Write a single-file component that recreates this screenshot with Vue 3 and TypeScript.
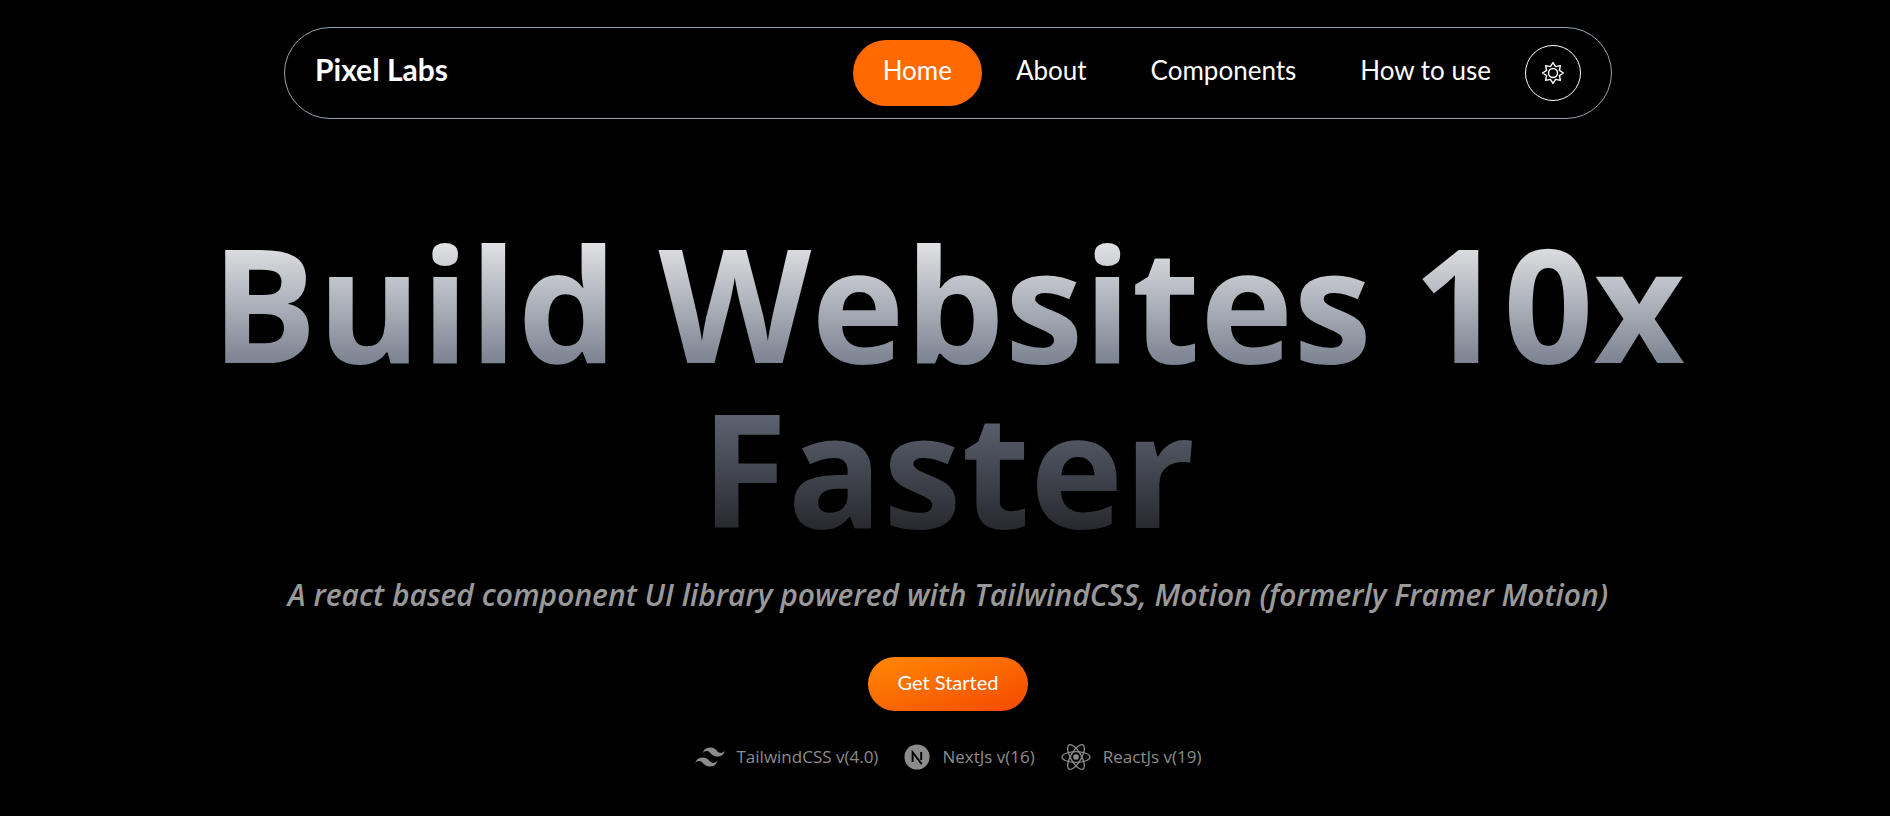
<script setup lang="ts">
interface NavItem {
  label: string
  active?: boolean
}

const navItems: NavItem[] = [
  { label: 'Home', active: true },
  { label: 'About' },
  { label: 'Components' },
  { label: 'How to use' },
]
</script>

<template>
  <div class="page">
    <header class="bar">
      <a class="brand" href="#">Pixel Labs</a>
      <nav class="links">
        <a
          v-for="item in navItems"
          :key="item.label"
          href="#"
          class="link"
          :class="{ active: item.active }"
          >{{ item.label }}</a
        >
        <button class="theme" type="button" aria-label="Toggle theme">
          <svg viewBox="0 0 24 24" width="24" height="24" fill="none" stroke="currentColor" stroke-width="1.400" stroke-linejoin="round">
            <path d="M12 1.600 14.600 5.600 19.400 4.600 18.400 9.400 22.400 12 18.400 14.600 19.400 19.400 14.600 18.400 12 22.400 9.400 18.400 4.600 19.400 5.600 14.600 1.600 12 5.600 9.400 4.600 4.600 9.400 5.600Z" />
            <circle cx="12" cy="12" r="4.500" />
          </svg>
        </button>
      </nav>
    </header>

    <main class="hero">
      <h1 class="title">Build Websites 10x Faster</h1>
      <p class="subtitle">
        A react based component UI library powered with TailwindCSS, Motion (formerly Framer Motion)
      </p>
      <button class="cta" type="button">Get Started</button>
      <ul class="stack">
        <li class="tech">
          <svg viewBox="0 0 30 20" width="30" height="20" fill="currentColor">
            <path d="M15 0.5c-4 0-6.500 2-7.500 6 1.500-2 3.250-2.750 5.250-2.250 1.140.280 1.960 1.110 2.860 2.030C17.070 7.770 18.770 9.500 22.500 9.500c4 0 6.500-2 7.500-6-1.500 2-3.250 2.750-5.250 2.250-1.140-.280-1.960-1.110-2.860-2.030C20.430 2.230 18.730.5 15 .5ZM7.500 10.500c-4 0-6.500 2-7.500 6 1.500-2 3.250-2.750 5.250-2.250 1.140.280 1.960 1.110 2.860 2.030 1.460 1.490 3.160 3.220 6.890 3.220 4 0 6.500-2 7.500-6-1.500 2-3.250 2.750-5.250 2.250-1.140-.280-1.960-1.110-2.860-2.030-1.460-1.490-3.160-3.220-6.890-3.220Z" />
          </svg>
          <span>TailwindCSS v(4.0)</span>
        </li>
        <li class="tech">
          <svg viewBox="0 0 26 26" width="26" height="26">
            <circle cx="13" cy="13" r="12.600" fill="currentColor" />
            <path d="M8.600 18V8.200L17.800 20.200M17.200 8v8" fill="none" stroke="#000" stroke-width="1.900" />
          </svg>
          <span>NextJs v(16)</span>
        </li>
        <li class="tech">
          <svg viewBox="0 0 30 28" width="30" height="28" fill="none" stroke="currentColor" stroke-width="1.300">
            <circle cx="15" cy="14" r="2.800" fill="currentColor" stroke="none" />
            <ellipse cx="15" cy="14" rx="14" ry="5.300" />
            <ellipse cx="15" cy="14" rx="14" ry="5.300" transform="rotate(60 15 14)" />
            <ellipse cx="15" cy="14" rx="14" ry="5.300" transform="rotate(120 15 14)" />
          </svg>
          <span>ReactJs v(19)</span>
        </li>
      </ul>
    </main>
  </div>
</template>

<style>
html,
body {
  margin: 0;
  background: #000;
}
</style>

<style scoped>
.page {
  box-sizing: border-box;
  min-height: 100vh;
  padding: 27px 0 32px 6px;
  background: #000;
  color: #fff;
  font-family: 'Open Sans', 'Noto Sans', sans-serif;
}
.bar {
  box-sizing: border-box;
  width: 1328px;
  max-width: 90%;
  margin: 0 auto;
  padding: 12px 30px;
  display: flex;
  align-items: center;
  justify-content: space-between;
  border: 1px solid #99a1af;
  border-radius: 46px;
  font-family: Lato, sans-serif;
}
.brand {
  color: #fff;
  font-size: 30px;
  font-weight: 700;
  line-height: 36px;
  padding-bottom: 8px;
  text-decoration: none;
}
.links {
  display: flex;
  align-items: center;
  gap: 4px;
}
.link {
  padding: 12px 30px 18px;
  border-radius: 33px;
  color: #fff;
  font-size: 26px;
  line-height: 36px;
  text-decoration: none;
  white-space: nowrap;
}
.link.active {
  background: #ff6900;
}
.theme {
  width: 56px;
  height: 56px;
  padding: 0;
  display: grid;
  place-items: center;
  border: 1px solid #fff;
  border-radius: 50%;
  background: transparent;
  color: #fff;
}
.hero {
  padding-top: 100px;
  display: flex;
  flex-direction: column;
  align-items: center;
}
.title {
  max-width: 1500px;
  margin: 0;
  font-size: 158px;
  font-weight: 700;
  line-height: 165px;
  text-align: center;
  color: transparent;
  background: linear-gradient(180deg, #f4f4f5 0%, #6a7282 50%, #1f1f23 100%);
  background-clip: text;
  -webkit-background-clip: text;
}
.subtitle {
  margin: 26px 0 0;
  color: #999;
  font-size: 30px;
  font-style: italic;
  font-weight: 600;
  line-height: 40px;
  text-align: center;
}
.cta {
  margin-top: 42px;
  padding: 10px 30px 14px;
  border: 0;
  border-radius: 27px;
  background: linear-gradient(to bottom right, #ff8904, #f54900);
  color: #fff;
  font-family: Lato, sans-serif;
  font-size: 20px;
  line-height: 30px;
}
.stack {
  margin: 32px 0 0;
  padding: 0;
  display: flex;
  gap: 26px;
  list-style: none;
  color: #8c8c8c;
  font-size: 17px;
  line-height: 28px;
}
.tech {
  display: flex;
  align-items: center;
  gap: 12px;
}
</style>
